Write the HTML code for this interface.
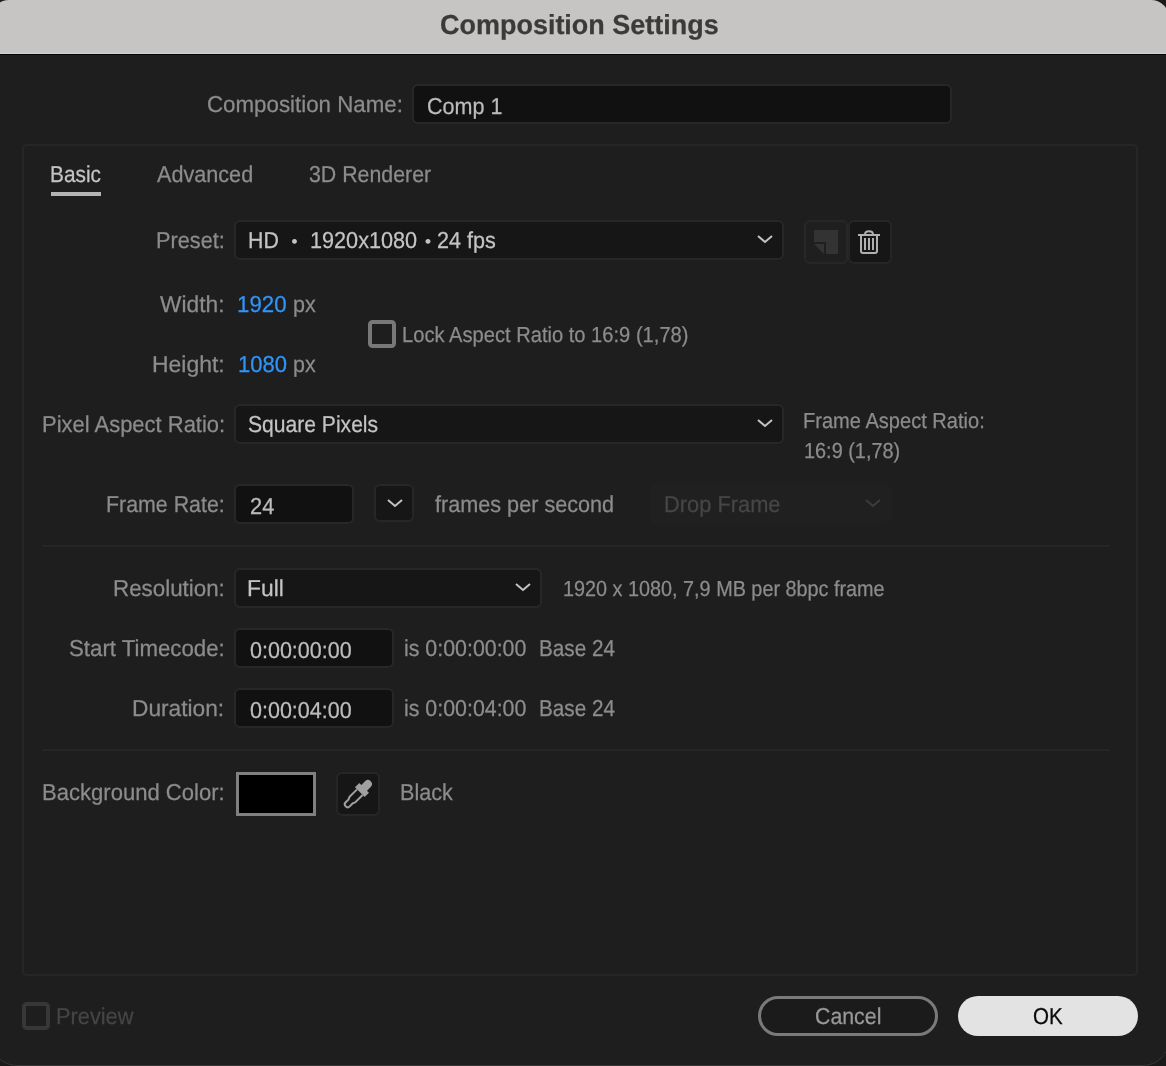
<!DOCTYPE html>
<html lang="en">
<head>
<meta charset="utf-8">
<title>Composition Settings</title>
<style>
html,body{margin:0;padding:0;}
body{width:1166px;height:1066px;overflow:hidden;background:#1a1a1a;font-family:"Liberation Sans",sans-serif;position:relative;}
#win{position:absolute;left:-9px;top:0;width:1178px;height:1066px;background:#1e1e1e;border-radius:18px 18px 26px 26px;overflow:hidden;}
#winedge{position:absolute;left:-9px;top:0;width:1178px;height:1066px;border-radius:18px 18px 26px 26px;box-shadow:inset 0 -1px 0 #353535;pointer-events:none;}
#titlebar{position:absolute;left:0;top:0;width:100%;height:53px;background:#c6c5c3;border-bottom:1px solid #d4d3d1;}
#tline{position:absolute;left:0;top:54px;width:100%;height:1px;background:#050505;}
.abs{position:absolute;box-sizing:border-box;}
.t{position:absolute;white-space:pre;transform-origin:0 0;text-rendering:geometricPrecision;-webkit-text-stroke:0.25px currentColor;}
.field{background:#111;border:2px solid #272727;border-radius:6px;}
.dd{background:#161616;}
.grp{border:2px solid #262626;border-radius:5px;}
.sep{height:2px;background:#252525;}
.btn{background:#161616;border:2px solid #262626;border-radius:6px;}
.btn.dis{background:#1f1f1f;border-color:#272727;}
svg{position:absolute;overflow:visible;}
</style>
</head>
<body>
<div id="win"><div id="titlebar"></div><div id="tline"></div></div>
<div id="winedge"></div>

<!-- composition name field -->
<div class="abs field" style="left:412px;top:84px;width:540px;height:40px;"></div>

<!-- group box -->
<div class="abs grp" style="left:22px;top:144px;width:1116px;height:832px;"></div>

<!-- tab underline -->
<div class="abs" style="left:51px;top:192px;width:50px;height:4px;background:#b4b4b4;"></div>

<!-- preset dropdown -->
<div class="abs field dd" style="left:234px;top:220px;width:550px;height:40px;"></div>
<svg style="left:757px;top:234px" width="16" height="10" viewBox="0 0 16 10"><path d="M1 2 L8 8 L15 2" fill="none" stroke="#c4c4c4" stroke-width="2"/></svg>

<!-- preset buttons -->
<div class="abs btn dis" style="left:804px;top:220px;width:44px;height:44px;"></div>
<svg style="left:814px;top:230px" width="24" height="24" viewBox="0 0 24 24"><path d="M0 0 H24 V24 H12 V13 Q12 12 11 12 H0 Z" fill="#333"/><path d="M0 14 H10 V24 Z" fill="#333"/></svg>
<div class="abs btn" style="left:848px;top:220px;width:44px;height:44px;"></div>
<svg style="left:858px;top:230px" width="22" height="24" viewBox="0 0 22 24">
<g fill="none" stroke="#b0b0b0" stroke-width="2">
<path d="M0 5 H22"/>
<path d="M7 5 V4.5 C7 0 15 0 15 4.5 V5"/>
<path d="M3 6 V21 Q3 23 5 23 H17 Q19 23 19 21 V6"/>
<path d="M7 8 V20 M11 8 V20 M15 8 V20"/>
</g></svg>

<!-- lock checkbox -->
<div class="abs" style="left:368px;top:320px;width:28px;height:28px;border:4px solid #787878;border-radius:4.5px;"></div>

<!-- PAR dropdown -->
<div class="abs field dd" style="left:234px;top:404px;width:550px;height:40px;"></div>
<svg style="left:757px;top:418px" width="16" height="10" viewBox="0 0 16 10"><path d="M1 2 L8 8 L15 2" fill="none" stroke="#c4c4c4" stroke-width="2"/></svg>

<!-- frame rate -->
<div class="abs field" style="left:234px;top:484px;width:120px;height:40px;"></div>
<div class="abs field dd" style="left:374px;top:484px;width:40px;height:38px;"></div>
<svg style="left:387px;top:498px" width="16" height="10" viewBox="0 0 16 10"><path d="M1 2 L8 8 L15 2" fill="none" stroke="#c4c4c4" stroke-width="2"/></svg>
<div class="abs field" style="left:650px;top:484px;width:242px;height:40px;background:#202020;border-color:#202020;"></div>
<svg style="left:865px;top:498px" width="16" height="10" viewBox="0 0 16 10"><path d="M1 2 L8 8 L15 2" fill="none" stroke="#3c3c3c" stroke-width="2"/></svg>

<div class="abs sep" style="left:42px;top:545px;width:1068px;"></div>

<!-- resolution -->
<div class="abs field dd" style="left:234px;top:568px;width:308px;height:40px;"></div>
<svg style="left:515px;top:582px" width="16" height="10" viewBox="0 0 16 10"><path d="M1 2 L8 8 L15 2" fill="none" stroke="#c4c4c4" stroke-width="2"/></svg>

<!-- timecodes -->
<div class="abs field" style="left:234px;top:628px;width:160px;height:40px;"></div>
<div class="abs field" style="left:234px;top:688px;width:160px;height:40px;"></div>

<div class="abs sep" style="left:42px;top:749px;width:1068px;"></div>

<!-- bg colour -->
<div class="abs" style="left:236px;top:772px;width:80px;height:44px;background:#000;border:3px solid #808080;"></div>
<div class="abs btn" style="left:336px;top:772px;width:44px;height:44px;"></div>
<svg style="left:336px;top:772px" width="44" height="44" viewBox="0 0 44 44">
<g transform="translate(22 22) rotate(45)">
<path d="M-4 -8 V-14 A4 4 0 0 1 4 -14 V-8 Z" fill="#a0a0a0"/>
<rect x="-6.85" y="-8.6" width="13.7" height="6.05" fill="#a0a0a0"/>
<path d="M-3.95 -2.6 V8 L-2.85 10.5 V14.6 A2.85 2.85 0 0 0 2.85 14.6 V10.5 L3.95 8 V-2.6" fill="none" stroke="#a0a0a0" stroke-width="2"/>
</g></svg>

<!-- preview checkbox -->
<div class="abs" style="left:22px;top:1002px;width:28px;height:28px;border:4px solid #373737;border-radius:4.5px;"></div>

<!-- buttons -->
<div class="abs" style="left:758px;top:996px;width:180px;height:40px;border:3px solid #7a7a7a;border-radius:20px;background:#1b1b1b;"></div>
<div class="abs" style="left:958px;top:996px;width:180px;height:40px;border-radius:20px;background:#e3e3e3;"></div>

<div id="txt" style="position:absolute;left:0;top:0;width:1166px;height:1066px;will-change:transform;">
<span class="t" id="bul1" style="left:291.5px;top:233.0px;font-size:17px;line-height:17px;color:#c4c4c4">•</span>
<span class="t" id="bul2" style="left:424.9px;top:233.0px;font-size:17px;line-height:17px;color:#c4c4c4">•</span>
<span id="title" class="t" style="left:439.90px;top:10.72px;font-size:27.5px;line-height:27.5px;color:#3a3a39;font-weight:700;transform:scaleX(0.9808)">Composition Settings</span>
<span id="l_name" class="t" style="left:206.79px;top:92.53px;font-size:23px;line-height:23px;color:#8c8c8c;font-weight:400;transform:scaleX(0.9700)">Composition Name:</span>
<span id="v_name" class="t" style="left:427.42px;top:94.53px;font-size:23px;line-height:23px;color:#bcbcbc;font-weight:400;transform:scaleX(0.9370)">Comp 1</span>
<span id="tab1" class="t" style="left:50.09px;top:162.53px;font-size:23px;line-height:23px;color:#c4c4c4;font-weight:400;transform:scaleX(0.9052)">Basic</span>
<span id="tab2" class="t" style="left:157.06px;top:162.53px;font-size:23px;line-height:23px;color:#8c8c8c;font-weight:400;transform:scaleX(0.9401)">Advanced</span>
<span id="tab3" class="t" style="left:308.63px;top:162.53px;font-size:23px;line-height:23px;color:#8c8c8c;font-weight:400;transform:scaleX(0.9278)">3D Renderer</span>
<span id="l_preset" class="t" style="left:156.02px;top:228.53px;font-size:23px;line-height:23px;color:#8c8c8c;font-weight:400;transform:scaleX(0.9447)">Preset:</span>
<span id="v_preset1" class="t" style="left:247.75px;top:228.53px;font-size:23px;line-height:23px;color:#c4c4c4;font-weight:400;transform:scaleX(0.9266)">HD</span>
<span id="v_preset2" class="t" style="left:309.61px;top:228.53px;font-size:23px;line-height:23px;color:#c4c4c4;font-weight:400;transform:scaleX(0.9412)">1920x1080</span>
<span id="v_preset3" class="t" style="left:436.84px;top:228.53px;font-size:23px;line-height:23px;color:#c4c4c4;font-weight:400;transform:scaleX(0.9388)">24 fps</span>
<span id="l_width" class="t" style="left:160.45px;top:292.53px;font-size:23px;line-height:23px;color:#8c8c8c;font-weight:400;transform:scaleX(0.9888)">Width:</span>
<span id="v_width" class="t" style="left:237.26px;top:292.53px;font-size:23px;line-height:23px;color:#3094fa;font-weight:400;transform:scaleX(0.9687)">1920</span>
<span id="u_width" class="t" style="left:292.67px;top:292.53px;font-size:23px;line-height:23px;color:#8c8c8c;font-weight:400;transform:scaleX(0.9359)">px</span>
<span id="l_height" class="t" style="left:151.73px;top:352.53px;font-size:23px;line-height:23px;color:#8c8c8c;font-weight:400;transform:scaleX(0.9966)">Height:</span>
<span id="v_height" class="t" style="left:237.88px;top:352.53px;font-size:23px;line-height:23px;color:#3094fa;font-weight:400;transform:scaleX(0.9563)">1080</span>
<span id="u_height" class="t" style="left:292.88px;top:352.53px;font-size:23px;line-height:23px;color:#8c8c8c;font-weight:400;transform:scaleX(0.9316)">px</span>
<span id="lock" class="t" style="left:401.61px;top:323.59px;font-size:21.75px;line-height:21.75px;color:#8c8c8c;font-weight:400;transform:scaleX(0.9256)">Lock Aspect Ratio to 16:9 (1,78)</span>
<span id="l_par" class="t" style="left:41.50px;top:412.53px;font-size:23px;line-height:23px;color:#8c8c8c;font-weight:400;transform:scaleX(0.9551)">Pixel Aspect Ratio:</span>
<span id="v_par" class="t" style="left:247.64px;top:412.53px;font-size:23px;line-height:23px;color:#c4c4c4;font-weight:400;transform:scaleX(0.9167)">Square Pixels</span>
<span id="far1" class="t" style="left:803.22px;top:409.59px;font-size:21.75px;line-height:21.75px;color:#8c8c8c;font-weight:400;transform:scaleX(0.9222)">Frame Aspect Ratio:</span>
<span id="far2" class="t" style="left:804.49px;top:439.59px;font-size:21.75px;line-height:21.75px;color:#8c8c8c;font-weight:400;transform:scaleX(0.9142)">16:9 (1,78)</span>
<span id="l_fr" class="t" style="left:105.85px;top:492.53px;font-size:23px;line-height:23px;color:#8c8c8c;font-weight:400;transform:scaleX(0.9290)">Frame Rate:</span>
<span id="v_fr" class="t" style="left:249.63px;top:494.53px;font-size:23px;line-height:23px;color:#bcbcbc;font-weight:400;transform:scaleX(0.9492)">24</span>
<span id="fps" class="t" style="left:434.63px;top:492.53px;font-size:23px;line-height:23px;color:#8c8c8c;font-weight:400;transform:scaleX(0.9404)">frames per second</span>
<span id="drop" class="t" style="left:663.51px;top:492.53px;font-size:23px;line-height:23px;color:#464646;font-weight:400;transform:scaleX(0.9493)">Drop Frame</span>
<span id="l_res" class="t" style="left:112.97px;top:576.53px;font-size:23px;line-height:23px;color:#8c8c8c;font-weight:400;transform:scaleX(0.9715)">Resolution:</span>
<span id="v_res" class="t" style="left:247.44px;top:576.53px;font-size:23px;line-height:23px;color:#c4c4c4;font-weight:400;transform:scaleX(0.9920)">Full</span>
<span id="res_info" class="t" style="left:562.59px;top:577.59px;font-size:21.75px;line-height:21.75px;color:#8c8c8c;font-weight:400;transform:scaleX(0.9110)">1920 x 1080, 7,9 MB per 8bpc frame</span>
<span id="l_start" class="t" style="left:68.89px;top:636.53px;font-size:23px;line-height:23px;color:#8c8c8c;font-weight:400;transform:scaleX(0.9671)">Start Timecode:</span>
<span id="v_start" class="t" style="left:250.15px;top:638.53px;font-size:23px;line-height:23px;color:#bcbcbc;font-weight:400;transform:scaleX(0.9344)">0:00:00:00</span>
<span id="i_start" class="t" style="left:403.88px;top:636.53px;font-size:23px;line-height:23px;color:#8c8c8c;font-weight:400;transform:scaleX(0.9289)">is 0:00:00:00</span>
<span id="b_start" class="t" style="left:539.10px;top:636.53px;font-size:23px;line-height:23px;color:#8c8c8c;font-weight:400;transform:scaleX(0.9006)">Base 24</span>
<span id="l_dur" class="t" style="left:132.05px;top:696.53px;font-size:23px;line-height:23px;color:#8c8c8c;font-weight:400;transform:scaleX(0.9875)">Duration:</span>
<span id="v_dur" class="t" style="left:250.15px;top:698.53px;font-size:23px;line-height:23px;color:#bcbcbc;font-weight:400;transform:scaleX(0.9344)">0:00:04:00</span>
<span id="i_dur" class="t" style="left:403.88px;top:696.53px;font-size:23px;line-height:23px;color:#8c8c8c;font-weight:400;transform:scaleX(0.9289)">is 0:00:04:00</span>
<span id="b_dur" class="t" style="left:539.10px;top:696.53px;font-size:23px;line-height:23px;color:#8c8c8c;font-weight:400;transform:scaleX(0.9006)">Base 24</span>
<span id="l_bg" class="t" style="left:41.70px;top:780.53px;font-size:23px;line-height:23px;color:#8c8c8c;font-weight:400;transform:scaleX(0.9592)">Background Color:</span>
<span id="black" class="t" style="left:399.93px;top:780.53px;font-size:23px;line-height:23px;color:#8c8c8c;font-weight:400;transform:scaleX(0.9390)">Black</span>
<span id="preview" class="t" style="left:55.52px;top:1004.53px;font-size:23px;line-height:23px;color:#454545;font-weight:400;transform:scaleX(0.9465)">Preview</span>
<span id="cancel" class="t" style="left:815.13px;top:1004.53px;font-size:23px;line-height:23px;color:#989898;font-weight:400;transform:scaleX(0.9271)">Cancel</span>
<span id="ok" class="t" style="left:1032.79px;top:1004.53px;font-size:23px;line-height:23px;color:#0c0c0c;font-weight:400;transform:scaleX(0.8950)">OK</span>
</div>
</body>
</html>
